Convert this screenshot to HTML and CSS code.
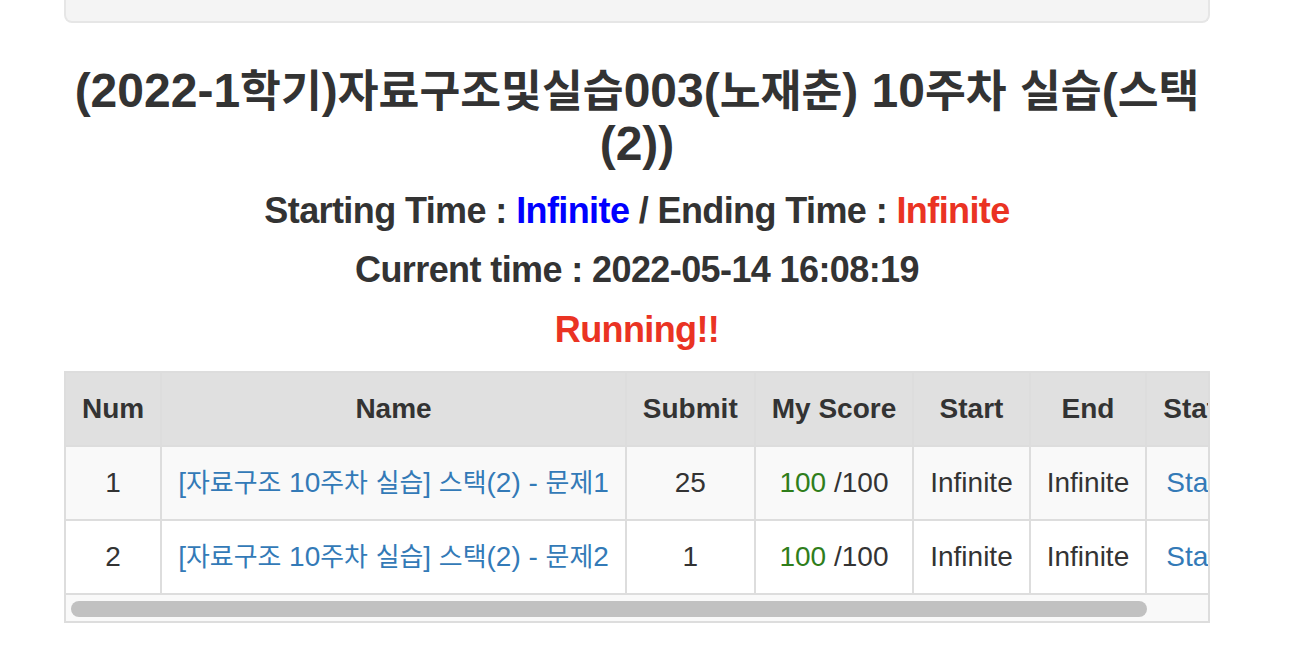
FILE: index.html
```html
<!DOCTYPE html>
<html lang="ko">
<head>
<meta charset="utf-8">
<title>Contest</title>
<link rel="stylesheet" href="styles.css">
</head>
<body>
<div class="container">
  <div class="well"></div>
  <h3 class="title">(2022-1<span class="ko">학기</span>)<span class="ko">자료구조및실습</span>003(<span class="ko">노재춘</span>) 10<span class="ko">주차</span> <span class="ko">실습</span>(<span class="ko">스택</span>(2))</h3>
  <h4 class="info">Starting Time : <span class="blue">Infinite</span> / Ending Time : <span class="red">Infinite</span></h4>
  <h4 class="info">Current time : 2022-05-14 16:08:19</h4>
  <h4 class="info red">Running!!</h4>
  <div class="table-responsive">
    <div class="table-scroll">
      <table class="table">
        <thead>
          <tr>
            <th>Num</th>
            <th>Name</th>
            <th>Submit</th>
            <th>My Score</th>
            <th>Start</th>
            <th>End</th>
            <th>Status</th>
          </tr>
        </thead>
        <tbody>
          <tr class="odd">
            <td>1</td>
            <td><a href="#">[<span class="ko">자료구조</span> 10<span class="ko">주차</span> <span class="ko">실습</span>] <span class="ko">스택</span>(2) - <span class="ko">문제</span>1</a></td>
            <td>25</td>
            <td><span class="green">100</span> /100</td>
            <td>Infinite</td>
            <td>Infinite</td>
            <td><a href="#">Status</a></td>
          </tr>
          <tr>
            <td>2</td>
            <td><a href="#">[<span class="ko">자료구조</span> 10<span class="ko">주차</span> <span class="ko">실습</span>] <span class="ko">스택</span>(2) - <span class="ko">문제</span>2</a></td>
            <td>1</td>
            <td><span class="green">100</span> /100</td>
            <td>Infinite</td>
            <td>Infinite</td>
            <td><a href="#">Status</a></td>
          </tr>
        </tbody>
      </table>
    </div>
    <div class="scrollbar"><div class="thumb"></div></div>
  </div>
</div>
</body>
</html>
```
FILE: styles.css
```css
html, body {
  margin: 0;
  padding: 0;
  background: #fff;
}
body {
  font-family: "Liberation Sans", "Noto Sans CJK KR", sans-serif;
  color: #333;
  font-size: 28px;
  line-height: 1.42857;
}
.container {
  width: 1146px;
  margin-left: 64px;
}
.well {
  height: 21px;
  background: #f4f4f4;
  border: 2px solid #e6e6e6;
  border-top: none;
  border-radius: 0 0 8px 8px;
}
.ko {
  font-family: "Noto Sans CJK KR", sans-serif;
  font-size: 0.925em;
  line-height: 1;
}
.title {
  font-size: 48px;
  font-weight: 700;
  line-height: 1.1;
  text-align: center;
  margin: 42px 0 20px;
}
.info {
  font-size: 36px;
  font-weight: 700;
  letter-spacing: -0.6px;
  line-height: 1.1;
  text-align: center;
  margin: 20px 0;
}
.blue { color: #0000ff; }
.red { color: #ea3323; }
.green { color: #2f7e1b; }
a {
  color: #337ab7;
  text-decoration: none;
}
.table-responsive {
  border: 2px solid #dddddd;
  margin-top: 22px;
  margin-bottom: 30px;
}
.table-scroll {
  overflow: hidden;
}
.scrollbar {
  height: 26px;
  background: #f9f9f9;
  padding: 6px 0 0 5px;
  box-sizing: border-box;
}
.thumb {
  width: 1076px;
  height: 16px;
  border-radius: 8px;
  background: #c1c1c1;
}
.table {
  border-collapse: collapse;
  width: 100%;
  white-space: nowrap;
}
.table th,
.table td {
  padding: 16px;
  line-height: 40px;
  text-align: center;
  border: 2px solid #dddddd;
}
.table th {
  background: #e0e0e0;
  font-weight: 700;
  border-top: none;
}
.table tr > :first-child { border-left: none; }
.table tr > :last-child { border-right: none; }
.table tbody tr td { background: #fff; }
.table tbody tr.odd td { background: #f9f9f9; }
.table td:nth-child(2) { text-align: left; }
```
